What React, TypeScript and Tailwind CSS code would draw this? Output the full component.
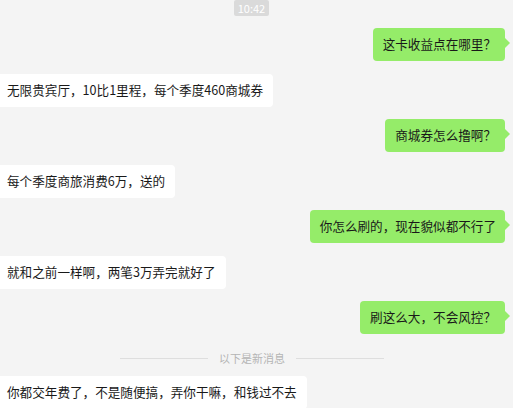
import React from "react";

const font = { fontFamily: '"Noto Sans CJK SC", "Noto Sans", sans-serif' };

function Right({ text }: { text: string }) {
  return (
    <div className="flex justify-end pr-[8px]">
      <div className="relative h-[33px] flex items-center rounded-[4px] bg-[#95ec69] pl-[10px] pr-[9px] text-[12.6px] text-[#191919] whitespace-nowrap">
        {text}
        <span className="absolute left-full top-[10px] w-0 h-0 border-y-[5px] border-y-transparent border-l-[5px] border-l-[#95ec69]" />
      </div>
    </div>
  );
}

function Left({ text }: { text: string }) {
  return (
    <div className="flex justify-start">
      <div className="-ml-[3px] h-[33px] flex items-center rounded-[4px] bg-white pl-[10px] pr-[10px] text-[12.6px] text-[#191919] whitespace-nowrap">
        {text}
      </div>
    </div>
  );
}

export default function App() {
  return (
    <div className="w-[513px] h-[408px] overflow-hidden bg-[#f4f4f4]" style={font}>
      <div className="flex flex-col">
        <div className="flex justify-center pr-[10px]">
          <div className="h-[16px] w-[35px] justify-center flex items-center bg-[#dadada] text-white text-[11px] rounded-[2px]">10:42</div>
        </div>
        <div className="flex flex-col gap-[12.5px] mt-[12px]">
          <Right text="这卡收益点在哪里？" />
          <Left text="无限贵宾厅，10比1里程，每个季度460商城券" />
          <Right text="商城券怎么撸啊？" />
          <Left text="每个季度商旅消费6万，送的" />
          <Right text="你怎么刷的，现在貌似都不行了" />
          <Left text="就和之前一样啊，两笔3万弄完就好了" />
          <Right text="刷这么大，不会风控？" />
        </div>
        <div className="mt-[17px] flex items-center justify-center pr-[9px]">
          <div className="w-[88px] h-px bg-[#dedede]" />
          <div className="mx-[11px] text-[11px] text-[#b5b5b5] leading-[14px]">以下是新消息</div>
          <div className="w-[88px] h-px bg-[#dedede]" />
        </div>
        <div className="mt-[11px]">
          <Left text="你都交年费了，不是随便搞，弄你干嘛，和钱过不去" />
        </div>
      </div>
    </div>
  );
}
